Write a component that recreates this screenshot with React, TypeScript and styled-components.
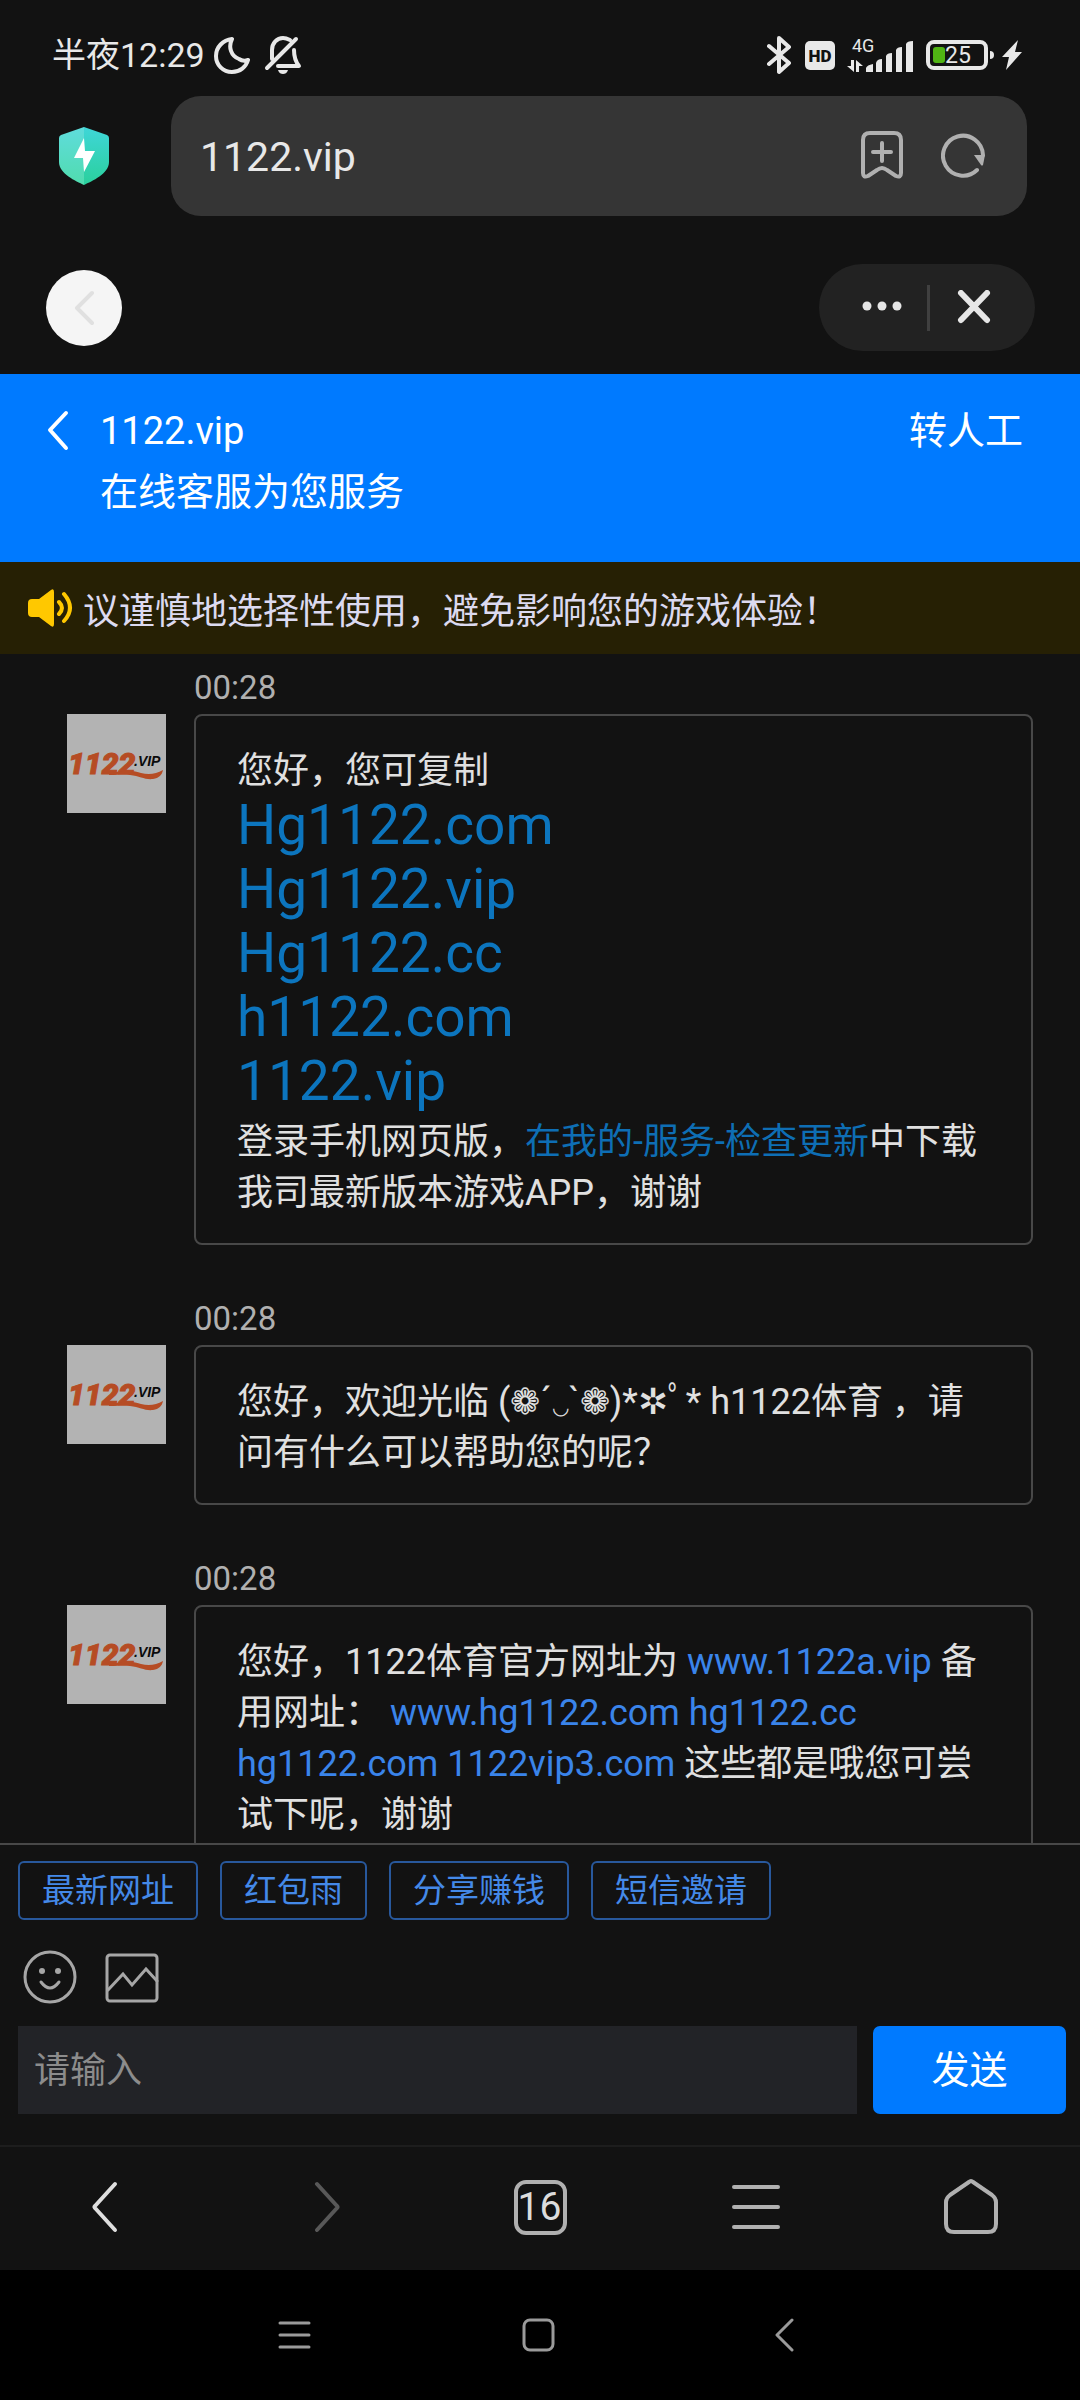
import React from "react";
import styled, { createGlobalStyle } from "styled-components";

const GlobalStyle = createGlobalStyle`
  *, *::before, *::after { box-sizing: border-box; }
  body {
    margin: 0;
    background: #121212;
    color: #e0e0e0;
    font-family: Roboto, "Noto Sans CJK SC", sans-serif;
  }
  button, input { font: inherit; }
  button { padding: 0; border: 0; background: none; color: inherit; }
  svg { display: block; flex: none; }
  a { text-decoration: none; }
`;

const Screen = styled.div`
  display: flex;
  flex-direction: column;
  height: 100vh;
`;

/* Phone status bar */
const StatusBar = styled.header`
  display: flex;
  align-items: center;
  justify-content: space-between;
  height: 96px;
  padding: 14px 58px 0 52px;
  color: #e8e8e8;
`;
const StatusGroup = styled.div<{ $gap: number }>`
  display: flex;
  align-items: center;
  gap: ${(p) => p.$gap}px;
`;
const Clock = styled.time`
  font-size: 34px;
  line-height: 40px;
  margin-right: -5px;
`;
const HdBadge = styled.span`
  width: 30px;
  height: 29px;
  border-radius: 5px;
  background: #e8e8e8;
  color: #121212;
  font-size: 17px;
  font-weight: 900;
  line-height: 30px;
  text-align: center;
`;

/* Browser address bar */
const AddressRow = styled.div`
  display: flex;
  align-items: center;
  gap: 62px;
  padding: 0 53px 0 59px;
`;
const AddressBox = styled.div`
  flex: 1;
  display: flex;
  align-items: center;
  gap: 37px;
  height: 120px;
  padding: 0 40px 0 29px;
  border-radius: 30px;
  background: #353535;
  color: #b0b0b0;
`;
const AddressInput = styled.input`
  flex: 1;
  min-width: 0;
  padding: 2px 0 0;
  border: 0;
  outline: 0;
  background: none;
  color: #e8e8e8;
  font-size: 41px;
`;

/* Mini-app controls */
const MiniBar = styled.div`
  display: flex;
  align-items: center;
  justify-content: space-between;
  padding: 48px 45px 23px 46px;
`;
const RoundBack = styled.button`
  display: grid;
  place-items: center;
  width: 76px;
  height: 76px;
  border-radius: 50%;
  background: #f5f5f5;
  color: #e0e0e0;
`;
const Capsule = styled.div`
  display: flex;
  align-items: center;
  width: 216px;
  height: 87px;
  border-radius: 44px;
  background: #222;
  color: #e6e6e6;
`;
const CapsuleButton = styled.button<{ $side: "left" | "right" }>`
  display: grid;
  place-items: center;
  flex: 1;
  height: 46px;
  padding: ${(p) => (p.$side === "left" ? "0 0 2px 18px" : "0 16px 2px 0")};
  border-right: ${(p) => (p.$side === "left" ? "3px solid #404040" : "0")};
`;

/* Service header */
const ChatHeader = styled.div`
  display: flex;
  align-items: flex-start;
  height: 188px;
  padding: 27px 57px 0 46px;
  background: #007aff;
  color: #fff;
  font-size: 38px;
  line-height: 61px;
`;
const HeaderBack = styled.button`
  display: flex;
  align-items: center;
  width: 54px;
  height: 60px;
`;
const Titles = styled.div`
  flex: 1;
`;
const Title = styled.h1`
  margin: 0;
  font-size: inherit;
  font-weight: 400;
`;
const Subtitle = styled.p`
  margin: 0;
`;
const Transfer = styled.button`
  line-height: 61px;
`;

const Notice = styled.div`
  display: flex;
  align-items: center;
  gap: 9px;
  height: 92px;
  padding: 0 28px;
  background: #262004;
  color: #dcdaf0;
  font-size: 36px;
`;

/* Conversation */
const Conversation = styled.main`
  flex: 1;
  min-height: 0;
  overflow-y: auto;
  scrollbar-width: none;
  display: flex;
  flex-direction: column;
  gap: 48px;
  padding: 8px 47px 48px 67px;
`;
const MessageRow = styled.article`
  flex: none;
  display: grid;
  grid-template-columns: 99px 1fr;
  column-gap: 28px;
`;
const Stamp = styled.time`
  grid-column: 2;
  color: #b0b0b0;
  font-size: 33px;
  line-height: 52px;
`;
const Avatar = styled.div`
  width: 99px;
  height: 99px;
  background: #b3b3b3;
`;
const Bubble = styled.div`
  padding: 30px 41px 24px;
  border: 2px solid #484848;
  border-radius: 8px;
  font-size: 36px;
  line-height: 51px;
`;
const Paragraph = styled.p`
  margin: 0;
`;
const DomainList = styled.ul`
  margin: -4px 0 4px;
  padding: 0;
  list-style: none;
  color: #0c75be;
  font-size: 55px;
  line-height: 64px;
`;
const Accent = styled.span`
  color: #0e6eb4;
`;
const Link = styled.a`
  color: #3a84ea;
`;
const Smile = styled.span`
  font-size: 20px;
  line-height: 1;
`;

/* Composer */
const Composer = styled.form`
  margin: 0;
  padding: 16px 14px 31px 18px;
  border-top: 2px solid #484848;
`;
const QuickReplies = styled.div`
  display: flex;
  gap: 22px;
`;
const QuickReply = styled.button`
  height: 59px;
  padding: 0 22px;
  border: 2px solid #28589c;
  border-radius: 6px;
  color: #4489e8;
  font-size: 33px;
  line-height: 50px;
`;
const Tools = styled.div`
  display: flex;
  gap: 28px;
  padding: 30px 5px 22px;
  color: #a6a6a6;
`;
const InputRow = styled.div`
  display: flex;
  gap: 16px;
`;
const MessageInput = styled.input`
  flex: 1;
  min-width: 0;
  height: 88px;
  padding: 2px 16px 0;
  border: 0;
  border-radius: 0;
  outline: 0;
  background: #222327;
  color: #e0e0e0;
  font-size: 36px;
  &::placeholder { color: #8c8c8c; opacity: 1; }
`;
const Send = styled.button`
  width: 193px;
  padding-bottom: 7px;
  border-radius: 7px;
  background: #007aff;
  color: #fff;
  font-size: 38px;
`;

/* Browser toolbar and system keys */
const Toolbar = styled.nav`
  display: grid;
  grid-template-columns: repeat(5, 1fr);
  height: 125px;
  padding-bottom: 3px;
  border-top: 2px solid #1d1d1d;
  color: #b0b0b0;
`;
const ToolbarButton = styled.button<{ $tone?: string }>`
  display: grid;
  place-items: center;
  color: ${(p) => p.$tone ?? "inherit"};
`;
const TabCount = styled.span`
  display: block;
  width: 53px;
  height: 55px;
  border: 4px solid #b0b0b0;
  border-radius: 12px;
  color: #dcdcdc;
  font-size: 39px;
  line-height: 47px;
  text-indent: -1px;
`;
const SystemKeys = styled.nav`
  display: flex;
  align-items: center;
  justify-content: center;
  gap: 209px;
  height: 130px;
  background: #000;
  color: #9a9a9a;
`;
const SystemKey = styled.button`
  display: grid;
  place-items: center;
  width: 36px;
  height: 48px;
`;

type LineIconProps = { w: number; h: number; stroke: number; children: React.ReactNode };
const LineIcon = ({ w, h, stroke, children }: LineIconProps) => (
  <svg
    width={w}
    height={h}
    viewBox={`0 0 ${w} ${h}`}
    fill="none"
    stroke="currentColor"
    strokeWidth={stroke}
    strokeLinecap="round"
    strokeLinejoin="round"
    aria-hidden="true"
  >
    {children}
  </svg>
);

const Moon = () => (
  <LineIcon w={36} h={38} stroke={4}>
    <path d="M18 3C9 4 2 11 2 20c0 9 7 16 16 16 8 0 14-5 16-12-3 1-6 1-9-1-8-3-11-12-7-20z" />
  </LineIcon>
);
const MutedBell = () => (
  <LineIcon w={38} h={40} stroke={4}>
    <path d="M3 33 32 4" />
    <path d="M8 24V15C8 8 13 3 19 3c3 0 5 1 7 2M30 15c0 7 1 11 5 16H14" />
    <path d="M14 35h10c-1 3-3 4-5 4s-4-1-5-4z" fill="currentColor" stroke="none" />
  </LineIcon>
);
const Bluetooth = () => (
  <LineIcon w={26} h={40} stroke={4}>
    <path d="M2 11 22 28 12 37V3l10 9L2 29" />
  </LineIcon>
);
const Signal = () => (
  <svg width="67" height="44" viewBox="0 -4 67 44" fill="currentColor" aria-hidden="true">
    <text x="5" y="15" fontSize="18" fontFamily="Roboto, sans-serif">4G</text>
    <path d="M4 23h3v12l-7-6h4zM9 35V23l7 6h-4v6z" />
    <path d="M19 35v-4q1-3 7-4v8zM29 26q1-4 6-4v13h-6zM39 19q1-3 6-3v19h-6zM49 13q1-3 6-3v25h-6zM59 7q1-3 7-3v31h-7z" />
  </svg>
);
const Battery = () => (
  <svg width="69" height="32" viewBox="0 0 69 32" aria-hidden="true">
    <rect x="2" y="3" width="58" height="26" rx="6" fill="none" stroke="currentColor" strokeWidth="4" />
    <rect x="7" y="8" width="12" height="16" rx="3" fill="#50b414" />
    <path d="M64 12q4 0 4 4t-4 4z" fill="currentColor" />
    <text x="19" y="24" fontSize="23" fill="currentColor" fontFamily="Roboto, sans-serif">25</text>
  </svg>
);
const Bolt = () => (
  <svg width="20" height="30" viewBox="0 0 20 30" fill="currentColor" aria-hidden="true">
    <path d="M16 0 0 17h7L4 30l16-18h-7z" />
  </svg>
);
const Shield = () => (
  <svg width="50" height="58" viewBox="0 0 50 58" aria-hidden="true">
    <defs>
      <linearGradient id="shieldLeft" x2="0" y2="1">
        <stop stopColor="#5fdcdc" />
        <stop offset="1" stopColor="#50dcae" />
      </linearGradient>
      <linearGradient id="shieldRight" x2="0" y2="1">
        <stop stopColor="#3fd6d8" />
        <stop offset="1" stopColor="#2ad09c" />
      </linearGradient>
    </defs>
    <path d="M25 0 2 8Q0 9 0 11v24c0 12 17 19 25 23z" fill="url(#shieldLeft)" />
    <path d="m25 0 23 8q2 1 2 3v24c0 12-17 19-25 23z" fill="url(#shieldRight)" />
    <path d="M25 11 15 31h9l1 14 11-21h-10z" fill="#fff" />
  </svg>
);
const BookmarkAdd = () => (
  <LineIcon w={44} h={50} stroke={4}>
    <path d="M10 2h24q7 0 7 7v33q0 5-5 3l-9-6q-5-4-10 0l-9 6q-5 2-5-3V9q0-7 7-7zM22 12v18M13 21h18" />
  </LineIcon>
);
const Reload = () => (
  <LineIcon w={46} h={46} stroke={4}>
    <path d="M36 37A20 20 0 1 1 42 22" />
    <path d="M33 22h11l-2 10q-1 1-2 0z" fill="currentColor" stroke="none" />
  </LineIcon>
);
const Speaker = () => (
  <svg width="46" height="40" viewBox="0 0 46 40" fill="#ffc800" aria-hidden="true">
    <path d="M4 11h7L23 2q3-2 3 2v32q0 4-3 2l-12-9H4q-4 0-4-4V15q0-4 4-4z" />
    <path
      d="M31 14q6 6 0 12M36 6q12 14 0 27"
      fill="none"
      stroke="#ffc800"
      strokeWidth="4"
      strokeLinecap="round"
    />
  </svg>
);
const BrandLogo = () => (
  <svg width="99" height="99" viewBox="0 0 99 99" role="img" aria-label="1122.VIP">
    <text
      x="1"
      y="60"
      fontFamily="Roboto, sans-serif"
      fontSize="30"
      fontWeight="900"
      fontStyle="italic"
      fill="#b64c24"
      stroke="#b64c24"
      strokeWidth="1"
    >
      1122
    </text>
    <path d="M42 60c12-4 22-4 32-1 8 2 15 1 22-3-1 5-4 8-10 9-8 1-13-3-23-4-6-1-12 0-21 0z" fill="#b64c24" />
    <text
      x="67"
      y="52"
      fontFamily="Liberation Sans, sans-serif"
      fontSize="14"
      fontWeight="700"
      fontStyle="italic"
      fill="#0a0a0a"
    >
      .VIP
    </text>
  </svg>
);

const Message = ({ children }: { children: React.ReactNode }) => (
  <MessageRow>
    <Stamp>00:28</Stamp>
    <Avatar>
      <BrandLogo />
    </Avatar>
    <Bubble>{children}</Bubble>
  </MessageRow>
);

const domains = ["Hg1122.com", "Hg1122.vip", "Hg1122.cc", "h1122.com", "1122.vip"];
const quickReplies = ["最新网址", "红包雨", "分享赚钱", "短信邀请"];

export default function App() {
  return (
    <>
      <GlobalStyle />
      <Screen>
        <StatusBar>
          <StatusGroup $gap={14}>
            <Clock>半夜12:29</Clock>
            <Moon />
            <MutedBell />
          </StatusGroup>
          <StatusGroup $gap={12}>
            <Bluetooth />
            <HdBadge>HD</HdBadge>
            <Signal />
            <StatusGroup $gap={7}>
              <Battery />
              <Bolt />
            </StatusGroup>
          </StatusGroup>
        </StatusBar>

        <AddressRow>
          <Shield />
          <AddressBox>
            <AddressInput aria-label="网址" defaultValue="1122.vip" />
            <button type="button" aria-label="添加书签">
              <BookmarkAdd />
            </button>
            <button type="button" aria-label="刷新">
              <Reload />
            </button>
          </AddressBox>
        </AddressRow>

        <MiniBar>
          <RoundBack type="button" aria-label="返回">
            <LineIcon w={20} h={36} stroke={4}>
              <path d="M18 3 3 18l15 15" />
            </LineIcon>
          </RoundBack>
          <Capsule>
            <CapsuleButton type="button" $side="left" aria-label="更多">
              <svg width="40" height="12" viewBox="0 0 40 12" fill="currentColor" aria-hidden="true">
                <circle cx="5" cy="5" r="4.5" />
                <circle cx="20" cy="5" r="4.5" />
                <circle cx="35" cy="5" r="4.5" />
              </svg>
            </CapsuleButton>
            <CapsuleButton type="button" $side="right" aria-label="关闭">
              <LineIcon w={34} h={34} stroke={6}>
                <path d="m4 3 26 27M30 3 4 30" />
              </LineIcon>
            </CapsuleButton>
          </Capsule>
        </MiniBar>

        <ChatHeader>
          <HeaderBack type="button" aria-label="返回">
            <LineIcon w={24} h={42} stroke={4}>
              <path d="M20 3 4 20l16 18" />
            </LineIcon>
          </HeaderBack>
          <Titles>
            <Title>1122.vip</Title>
            <Subtitle>在线客服为您服务</Subtitle>
          </Titles>
          <Transfer type="button">转人工</Transfer>
        </ChatHeader>

        <Notice>
          <Speaker />
          <span>议谨慎地选择性使用，避免影响您的游戏体验！</span>
        </Notice>

        <Conversation>
          <Message>
            <Paragraph>您好，您可复制</Paragraph>
            <DomainList>
              {domains.map((domain) => (
                <li key={domain}>{domain}</li>
              ))}
            </DomainList>
            <Paragraph>
              登录手机网页版，<Accent>在我的-服务-检查更新</Accent>中下载我司最新版本游戏APP，谢谢
            </Paragraph>
          </Message>
          <Message>
            <Paragraph>
              您好，欢迎光临 (❁´<Smile>◡</Smile>`❁)*✲ﾟ* h1122体育 ，请问有什么可以帮助您的呢？
            </Paragraph>
          </Message>
          <Message>
            <Paragraph>
              您好，1122体育官方网址为 <Link href="#a">www.1122a.vip</Link> 备用网址：{" "}
              <Link href="#b">www.hg1122.com</Link> <Link href="#c">hg1122.cc</Link>{" "}
              <Link href="#d">hg1122.com</Link> <Link href="#e">1122vip3.com</Link>{" "}
              这些都是哦您可尝试下呢，谢谢
            </Paragraph>
          </Message>
        </Conversation>

        <Composer onSubmit={(e) => e.preventDefault()}>
          <QuickReplies>
            {quickReplies.map((label) => (
              <QuickReply key={label} type="button">
                {label}
              </QuickReply>
            ))}
          </QuickReplies>
          <Tools>
            <button type="button" aria-label="表情">
              <LineIcon w={54} h={54} stroke={3}>
                <circle cx="27" cy="27" r="25" />
                <circle cx="19" cy="21" r="3" fill="currentColor" stroke="none" />
                <circle cx="35" cy="21" r="3" fill="currentColor" stroke="none" />
                <path d="M18 32q9 12 18 0" />
              </LineIcon>
            </button>
            <button type="button" aria-label="图片">
              <LineIcon w={54} h={54} stroke={3}>
                <rect x="2" y="5" width="50" height="46" rx="3" />
                <path d="m3 40 15-16 9 11 14-16 11 12" strokeLinejoin="miter" />
              </LineIcon>
            </button>
          </Tools>
          <InputRow>
            <MessageInput aria-label="消息" placeholder="请输入" />
            <Send type="submit">发送</Send>
          </InputRow>
        </Composer>

        <Toolbar aria-label="浏览器工具栏">
          <ToolbarButton type="button" aria-label="后退" $tone="#dedede">
            <LineIcon w={36} h={54} stroke={4}>
              <path d="M25 4 5 26q-1 1 0 2l20 22" />
            </LineIcon>
          </ToolbarButton>
          <ToolbarButton type="button" aria-label="前进" $tone="#585858">
            <LineIcon w={32} h={54} stroke={4}>
              <path d="m9 4 20 22q1 1 0 2L9 50" />
            </LineIcon>
          </ToolbarButton>
          <ToolbarButton type="button" aria-label="标签页 16">
            <TabCount>16</TabCount>
          </ToolbarButton>
          <ToolbarButton type="button" aria-label="菜单">
            <LineIcon w={50} h={54} stroke={4}>
              <path d="M3 7h44M3 27h44M3 47h44" />
            </LineIcon>
          </ToolbarButton>
          <ToolbarButton type="button" aria-label="主页">
            <LineIcon w={56} h={58} stroke={4}>
              <path d="M25 4q2-2 4 0l19 13q4 3 4 7v22q0 8-8 8H10q-8 0-8-8V24q0-4 4-7z" />
            </LineIcon>
          </ToolbarButton>
        </Toolbar>

        <SystemKeys aria-label="系统导航">
          <SystemKey type="button" aria-label="最近任务">
            <LineIcon w={34} h={30} stroke={3}>
              <path d="M2 3h29M2 15h29M2 27h29" />
            </LineIcon>
          </SystemKey>
          <SystemKey type="button" aria-label="主屏幕">
            <LineIcon w={36} h={34} stroke={3}>
              <rect x="2" y="2" width="29" height="30" rx="6" />
            </LineIcon>
          </SystemKey>
          <SystemKey type="button" aria-label="返回">
            <LineIcon w={20} h={34} stroke={3}>
              <path d="M17 2 2 17l15 15" />
            </LineIcon>
          </SystemKey>
        </SystemKeys>
      </Screen>
    </>
  );
}
